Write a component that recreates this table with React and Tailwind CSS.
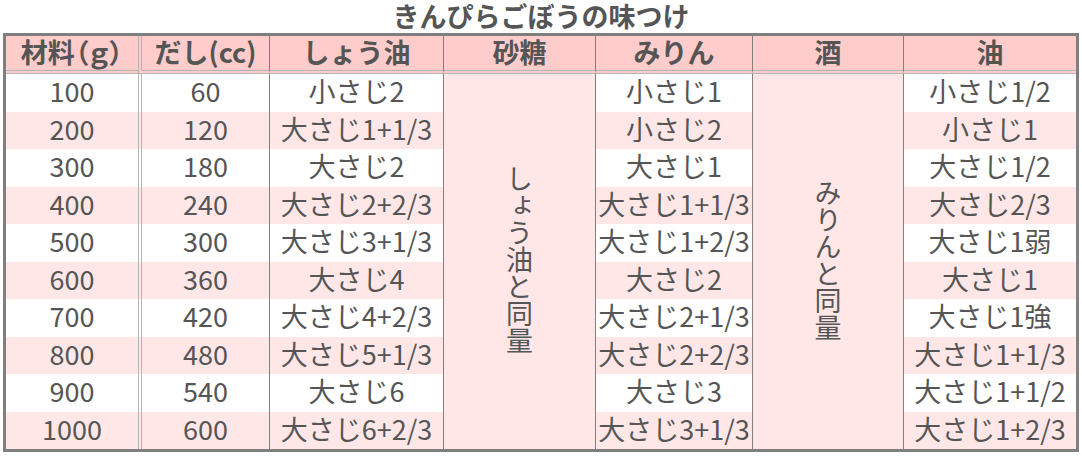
import React from "react";

const rows = [
  ["100", "60", "小さじ2", "小さじ1", "小さじ1/2"],
  ["200", "120", "大さじ1+1/3", "小さじ2", "小さじ1"],
  ["300", "180", "大さじ2", "大さじ1", "大さじ1/2"],
  ["400", "240", "大さじ2+2/3", "大さじ1+1/3", "大さじ2/3"],
  ["500", "300", "大さじ3+1/3", "大さじ1+2/3", "大さじ1弱"],
  ["600", "360", "大さじ4", "大さじ2", "大さじ1"],
  ["700", "420", "大さじ4+2/3", "大さじ2+1/3", "大さじ1強"],
  ["800", "480", "大さじ5+1/3", "大さじ2+2/3", "大さじ1+1/3"],
  ["900", "540", "大さじ6", "大さじ3", "大さじ1+1/2"],
  ["1000", "600", "大さじ6+2/3", "大さじ3+1/3", "大さじ1+2/3"],
];

const rowStarts = [
  "row-start-2",
  "row-start-3",
  "row-start-4",
  "row-start-5",
  "row-start-6",
  "row-start-7",
  "row-start-8",
  "row-start-9",
  "row-start-10",
  "row-start-11",
];

const headers = ["材料（ｇ）", "だし(cc)", "しょう油", "砂糖", "みりん", "酒", "油"];

const cell = "flex items-center justify-center whitespace-nowrap pb-[4px]";
const dark = "border-l border-[#808080]";
const dbl = "border-l-4 border-double border-[#b4b4b4]";

export default function App() {
  return (
    <div
      className="w-[1082px] h-[456px] bg-white text-[#555555]"
      style={{ fontFamily: '"Noto Sans CJK JP", "Noto Sans", sans-serif' }}
    >
      <div className="h-[33px] flex items-center justify-center text-[27px] font-bold leading-[33px] overflow-visible">
        <span className="-mt-[2px]">きんぴらごぼうの味つけ</span>
      </div>
      <div className="mx-auto w-[1076px] border-[3px] border-[#7f7f7f]">
        <div className="grid grid-cols-[132px_131px_174px_152px_157px_151px_173px] grid-rows-[38px_repeat(10,37.5px)] text-[27px] leading-none">
          {headers.map((h, i) => (
            <div
              key={h}
              className={`${cell} row-start-1 bg-[#ffcccc] font-bold border-b-4 border-b-[#b4b4b4] border-double ${
                i === 1 ? dbl : i > 1 ? dark : ""
              } ${i === 0 ? "[font-feature-settings:'palt']" : ""}`}
            >
              {h}
            </div>
          ))}
          <div
            className={`${cell} col-start-4 row-start-2 row-span-10 bg-[#ffe7e7] ${dark}`}
          >
            <span className="[writing-mode:vertical-rl]">しょう油と同量</span>
          </div>
          <div
            className={`${cell} col-start-6 row-start-2 row-span-10 bg-[#ffe7e7] ${dark}`}
          >
            <span className="[writing-mode:vertical-rl]">みりんと同量</span>
          </div>
          {rows.map((r, i) => {
            const bg = i % 2 === 1 ? "bg-[#ffe7e7]" : "bg-white";
            const rs = rowStarts[i];
            return (
              <React.Fragment key={r[0]}>
                <div className={`${cell} ${bg} ${rs} col-start-1`}>{r[0]}</div>
                <div className={`${cell} ${bg} ${rs} col-start-2 ${dbl}`}>{r[1]}</div>
                <div className={`${cell} ${bg} ${rs} col-start-3 ${dark}`}>{r[2]}</div>
                <div className={`${cell} ${bg} ${rs} col-start-5 ${dark}`}>{r[3]}</div>
                <div className={`${cell} ${bg} ${rs} col-start-7 ${dark}`}>{r[4]}</div>
              </React.Fragment>
            );
          })}
        </div>
      </div>
    </div>
  );
}
